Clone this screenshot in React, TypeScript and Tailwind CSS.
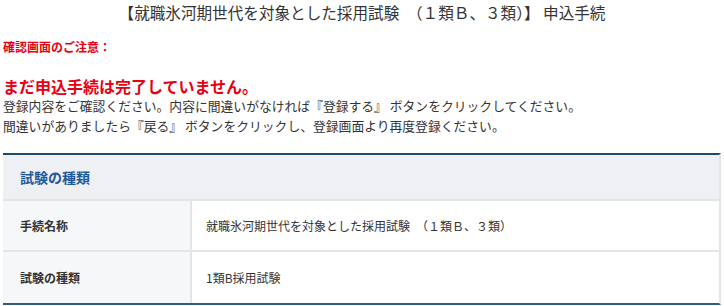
const jp = { fontFamily: '"Noto Sans CJK JP", "Noto Sans", sans-serif' };

const rows = [
  { label: '手続名称', value: '就職氷河期世代を対象とした採用試験　（１類Ｂ、３類）' },
  { label: '試験の種類', value: '1類B採用試験' },
];

export default function App() {
  return (
    <div className="w-[724px] h-[306px] overflow-hidden bg-white text-[#333]" style={jp}>
      {/* Title */}
      <h1 className="h-[27px] pt-[2px] text-center text-[15.6px] leading-[20px] font-normal text-[#333]">
        【就職氷河期世代を対象とした採用試験　（１類Ｂ、３類）】 申込手続
      </h1>

      {/* Notice */}
      <div className="px-[3px]">
        <p className="mt-[12px] text-[12px] leading-[16px] font-bold text-[#e60012]">確認画面のご注意：</p>
        <p className="mt-[21px] text-[16px] leading-[20px] font-bold text-[#e60012]">まだ申込手続は完了していません。</p>
        <p className="text-[12.8px] leading-[20px]">
          登録内容をご確認ください。内容に間違いがなければ『登録する』 ボタンをクリックしてください。
        </p>
        <p className="text-[12.8px] leading-[20px]">
          間違いがありましたら『戻る』 ボタンをクリックし、登録画面より再度登録ください。
        </p>
      </div>

      {/* Table */}
      <div className="mx-[3px] mt-[17px] border-t-2 border-b-2 border-t-[#1d4c72] border-b-[#2b5d8c] border-r-2 border-r-[#e3e5e8]">
        <div className="h-[46px] flex items-center px-[17px] bg-[#eef0f3] border-b-2 border-[#e3e5e8]">
          <span className="text-[14px] font-bold text-[#1d5a9c]">試験の種類</span>
        </div>
        {rows.map((r, i) => (
          <div
            key={r.label}
            className={`flex h-[51px] ${i === 0 ? 'border-b-2 border-[#e3e5e8]' : ''}`}
          >
            <div className="w-[189px] shrink-0 flex items-center px-[17px] bg-[#f6f7f8] border-r-2 border-[#e3e5e8] text-[12px] font-bold text-[#333]">
              {r.label}
            </div>
            <div className="flex-1 flex items-center px-[14px] text-[12px] text-[#333]">{r.value}</div>
          </div>
        ))}
      </div>
    </div>
  );
}
